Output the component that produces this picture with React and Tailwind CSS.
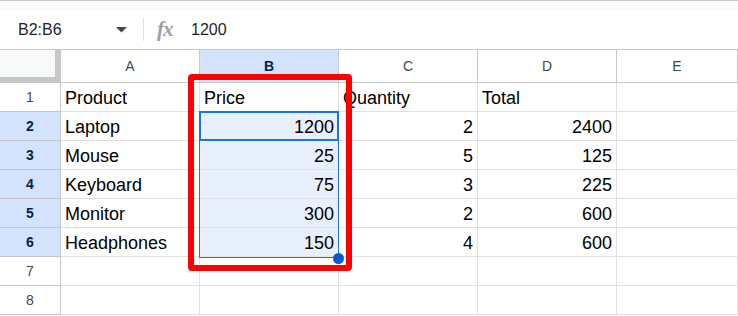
import React from 'react'

const cols = ['A', 'B', 'C', 'D', 'E']

const rows = [
  ['Product', 'Price', 'Quantity', 'Total'],
  ['Laptop', 1200, 2, 2400],
  ['Mouse', 25, 5, 125],
  ['Keyboard', 75, 3, 225],
  ['Monitor', 300, 2, 600],
  ['Headphones', 150, 4, 600],
  [],
  [],
]

function Cell({ value, selected }) {
  const isNum = typeof value === 'number'
  return (
    <div
      className={`h-[29px] flex items-end pb-[3px] px-[4px] border-r border-b border-[#e1e1e1] text-[18px] leading-[20px] text-black whitespace-nowrap ${
        isNum ? 'justify-end' : 'justify-start'
      } ${selected ? 'bg-[#e8f0fe]' : 'bg-white'}`}>
      {value}
    </div>
  )
}

export default function App() {
  return (
    <div className="relative w-[738px] h-[316px] overflow-hidden bg-white font-['Liberation_Sans',Arial,sans-serif]">
      <div className="h-[10px] border-t border-[#c4c7c5] bg-[#f9fbfd]" />

      {/* formula bar */}
      <div className="h-[39px] flex items-center text-[16px] text-[#1f1f1f]">
        <span className="ml-[18px] w-[98px]">B2:B6</span>
        <svg width="11" height="6" viewBox="0 0 11 6" className="mt-[1px]">
          <polygon points="0,0 11,0 5.5,5.5" fill="#444746" />
        </svg>
        <div className="ml-[16px] w-px h-[23px] bg-[#e1e3e1]" />
        <span className="ml-[13px] w-[34px] italic font-bold text-[21px] text-[#9e9e9e] font-['Liberation_Serif',serif] tracking-[-1px]">
          fx
        </span>
        <span>1200</span>
      </div>

      {/* grid */}
      <div className="grid grid-cols-[61px_139px_139px_139px_139px_1fr] border-t border-[#c4c7c5]">
        <div className="h-[33px] bg-[#f8f9fa] border-r-[6px] border-b-[6px] border-[#c4c7c5]" />
        {cols.map(c => (
          <div
            key={c}
            className={`h-[33px] flex items-center justify-center border-r border-b border-[#c4c7c5] text-[14px] ${
              c === 'B' ? 'bg-[#d3e3fd] font-bold text-[#041e49]' : 'bg-white text-[#444746]'
            }`}>
            {c}
          </div>
        ))}

        {rows.map((row, r) => {
          const n = r + 1
          const sel = n >= 2 && n <= 6
          return (
            <React.Fragment key={n}>
              <div
                className={`h-[29px] flex items-center justify-center border-r border-b border-[#c4c7c5] text-[14px] ${
                  sel ? 'bg-[#d3e3fd] font-bold text-[#041e49]' : 'bg-white text-[#444746]'
                }`}>
                {n}
              </div>
              {cols.map((c, i) => (
                <Cell key={c} value={row[i]} selected={sel && c === 'B'} />
              ))}
            </React.Fragment>
          )
        })}
      </div>

      {/* selection range */}
      <div className="absolute left-[199px] top-[111px] w-[140px] h-[147px] border border-[#1a73e8] pointer-events-none" />
      {/* active cell */}
      <div className="absolute left-[199px] top-[111px] w-[140px] h-[30px] border-2 border-[#1a73e8] pointer-events-none" />
      {/* fill handle */}
      <div className="absolute left-[333px] top-[253px] w-[11px] h-[11px] rounded-full bg-[#0b57d0]" />

      {/* red highlight */}
      <div className="absolute left-[188px] top-[74px] w-[164px] h-[197px] border-[6px] border-[#ff0000] rounded-[4px] pointer-events-none" />
    </div>
  )
}
